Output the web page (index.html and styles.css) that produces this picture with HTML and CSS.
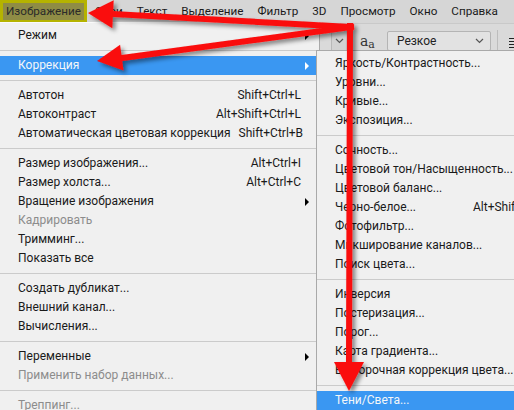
FILE: index.html
```html
<!DOCTYPE html>
<html lang="ru">
<head>
    <meta charset="UTF-8">
    <meta name="viewport" content="width=device-width, initial-scale=1.0">
    <title>Изображение — Коррекция</title>
    <link rel="stylesheet" href="styles.css">
</head>
<body>
    <div class="ps">
        <nav class="menubar">
            <span class="mb-item active">Изображение</span>
            <span class="mb-item">Слои</span>
            <span class="mb-item">Текст</span>
            <span class="mb-item">Выделение</span>
            <span class="mb-item">Фильтр</span>
            <span class="mb-item">3D</span>
            <span class="mb-item">Просмотр</span>
            <span class="mb-item">Окно</span>
            <span class="mb-item">Справка</span>
        </nav>

        <div class="optbar">
            <span class="opt-drop">
                <svg width="9" height="6" viewBox="0 0 9 6"><path d="M1 1 L4.5 4.5 L8 1" fill="none" stroke="#555" stroke-width="1.2"/></svg>
            </span>
            <span class="opt-aa">a<span class="opt-aa-small">a</span></span>
            <span class="opt-select">
                <span>Резкое</span>
                <svg width="9" height="6" viewBox="0 0 9 6"><path d="M1 1 L4.5 4.5 L8 1" fill="none" stroke="#555" stroke-width="1.2"/></svg>
            </span>
            <span class="opt-div"></span>
            <span class="opt-align">
                <svg width="10" height="14" viewBox="0 0 10 14">
                    <path d="M0 1.5 H10 M0 4.5 H10 M0 7.5 H10 M0 10.5 H10 M0 13.5 H10" stroke="#222" stroke-width="1"/>
                </svg>
            </span>
        </div>

        <ul class="menu menu-main">
            <li class="item"><span class="label">Режим</span><span class="key"></span><span class="arrow"><i></i></span></li>
            <li class="sep"></li>
            <li class="item hover"><span class="label">Коррекция</span><span class="key"></span><span class="arrow"><i></i></span></li>
            <li class="sep"></li>
            <li class="item"><span class="label">Автотон</span><span class="key">Shift+Ctrl+L</span><span class="arrow"></span></li>
            <li class="item"><span class="label">Автоконтраст</span><span class="key">Alt+Shift+Ctrl+L</span><span class="arrow"></span></li>
            <li class="item"><span class="label">Автоматическая цветовая коррекция</span><span class="key">Shift+Ctrl+B</span><span class="arrow"></span></li>
            <li class="sep"></li>
            <li class="item"><span class="label">Размер изображения...</span><span class="key">Alt+Ctrl+I</span><span class="arrow"></span></li>
            <li class="item"><span class="label">Размер холста...</span><span class="key">Alt+Ctrl+C</span><span class="arrow"></span></li>
            <li class="item"><span class="label">Вращение изображения</span><span class="key"></span><span class="arrow"><i></i></span></li>
            <li class="item disabled"><span class="label">Кадрировать</span><span class="key"></span><span class="arrow"></span></li>
            <li class="item"><span class="label">Тримминг...</span><span class="key"></span><span class="arrow"></span></li>
            <li class="item"><span class="label">Показать все</span><span class="key"></span><span class="arrow"></span></li>
            <li class="sep"></li>
            <li class="item"><span class="label">Создать дубликат...</span><span class="key"></span><span class="arrow"></span></li>
            <li class="item"><span class="label">Внешний канал...</span><span class="key"></span><span class="arrow"></span></li>
            <li class="item"><span class="label">Вычисления...</span><span class="key"></span><span class="arrow"></span></li>
            <li class="sep"></li>
            <li class="item"><span class="label">Переменные</span><span class="key"></span><span class="arrow"><i></i></span></li>
            <li class="item disabled"><span class="label">Применить набор данных...</span><span class="key"></span><span class="arrow"></span></li>
            <li class="sep"></li>
            <li class="item disabled"><span class="label">Треппинг...</span><span class="key"></span><span class="arrow"></span></li>
        </ul>

        <ul class="menu menu-sub">
            <li class="item"><span class="label">Яркость/Контрастность...</span><span class="key"></span></li>
            <li class="item"><span class="label">Уровни...</span><span class="key"></span></li>
            <li class="item"><span class="label">Кривые...</span><span class="key"></span></li>
            <li class="item"><span class="label">Экспозиция...</span><span class="key"></span></li>
            <li class="sep"></li>
            <li class="item"><span class="label">Сочность...</span><span class="key"></span></li>
            <li class="item"><span class="label">Цветовой тон/Насыщенность...</span><span class="key"></span></li>
            <li class="item"><span class="label">Цветовой баланс...</span><span class="key"></span></li>
            <li class="item"><span class="label">Черно-белое...</span><span class="key">Alt+Shift+Ctrl+B</span></li>
            <li class="item"><span class="label">Фотофильтр...</span><span class="key"></span></li>
            <li class="item"><span class="label">Микширование каналов...</span><span class="key"></span></li>
            <li class="item"><span class="label">Поиск цвета...</span><span class="key"></span></li>
            <li class="sep"></li>
            <li class="item"><span class="label">Инверсия</span><span class="key"></span></li>
            <li class="item"><span class="label">Постеризация...</span><span class="key"></span></li>
            <li class="item"><span class="label">Порог...</span><span class="key"></span></li>
            <li class="item"><span class="label">Карта градиента...</span><span class="key"></span></li>
            <li class="item"><span class="label">Выборочная коррекция цвета...</span><span class="key"></span></li>
            <li class="sep"></li>
            <li class="item hover"><span class="label">Тени/Света...</span><span class="key"></span></li>
        </ul>

        <!-- red arrows drawn over the screenshot -->
        <svg class="arrows" width="514" height="410" viewBox="0 0 514 410">
            <defs>
                <filter id="shadow" x="-10%" y="-10%" width="130%" height="130%">
                    <feDropShadow dx="3" dy="3" stdDeviation="2" flood-color="#000" flood-opacity="0.45"/>
                </filter>
            </defs>
            <g filter="url(#shadow)" fill="#fa0c0c" stroke="#fa0c0c">
                <path d="M112 14 L351 27 M122 58 L351 27 M350 26 L349 363" fill="none" stroke-width="6" stroke-linecap="square"/>
                <polygon points="88,13 113.7,0.3 112.3,28.3" stroke="none"/>
                <polygon points="97,61 120.1,44.8 123.5,70.6" stroke="none"/>
                <polygon points="349,391 334,362 364,362" stroke="none"/>
            </g>
        </svg>
    </div>
</body>
</html>
```

FILE: styles.css
```css
body {
    margin: 0;
    overflow: hidden;
}

.ps {
    position: relative;
    width: 514px;
    height: 410px;
    overflow: hidden;
    background: #d8d8d8;
    font-family: Roboto, "Noto Sans", sans-serif;
    font-size: 12px;
    color: #1a1a1a;
}

/* top menu bar */
.menubar {
    display: flex;
    align-items: center;
    height: 23px;
    background: #d6d6d6;
    white-space: nowrap;
}

.mb-item {
    padding: 0 7px;
    line-height: 17px;
    font-size: 11.7px;
}

.mb-item.active {
    margin: 0 4px 0 3px;
    padding: 0 3px;
    background: #8f8c45;
    box-shadow: 0 0 0 3px #b5b300;
    color: #2a2a2a;
}

/* options bar, mostly hidden under the menus */
.optbar {
    display: flex;
    align-items: center;
    width: max-content;
    height: 34px;
    padding-left: 331px;
    background: #dadada;
    border-top: 1px solid #c9c9c9;
}

.optbar > span {
    flex: none;
}

.opt-drop {
    display: flex;
    align-items: center;
    justify-content: center;
    width: 14px;
    height: 20px;
    border-left: 1px solid #b8b8b8;
    border-right: 1px solid #c4c4c4;
    background: #d2d2d2;
}

.opt-aa {
    margin-left: 13px;
    font-family: "DejaVu Serif", serif;
    font-size: 14px;
    color: #333;
}

.opt-aa-small {
    font-size: 11px;
    position: relative;
    top: 2px;
}

.opt-select {
    display: flex;
    align-items: center;
    justify-content: space-between;
    box-sizing: border-box;
    width: 104px;
    height: 20px;
    margin-left: 12px;
    padding: 0 6px 0 9px;
    background: #e2e2e2;
    border: 1px solid #b4b4b4;
    border-radius: 2px;
    color: #222;
}

.opt-div {
    width: 1px;
    height: 22px;
    margin-left: 6px;
    background: #bdbdbd;
}

.opt-align {
    display: flex;
    margin-left: 11px;
    padding-top: 6px;
}

/* dropdown menus */
.menu {
    position: absolute;
    margin: 0;
    padding: 3px 0 0;
    list-style: none;
    background: #f0f0f0;
    white-space: nowrap;
    box-sizing: border-box;
}

.menu-main {
    left: 0;
    top: 22px;
    width: 320px;
    height: 400px;
    border-top: 1px solid #fafafa;
    border-right: 1px solid #a9a9a9;
}

.menu-sub {
    left: 316px;
    top: 50px;
    width: 262px;
    height: 370px;
    border: 1px solid #a9a9a9;
}

.item {
    display: grid;
    grid-template-columns: 1fr auto 12px;
    align-items: center;
    height: 19px;
    padding: 0 6px 0 18px;
    line-height: 19px;
}

.menu-sub .item {
    grid-template-columns: 1fr auto;
    padding: 0 18px 0 18px;
}

.key {
    padding-left: 8px;
}

.arrow i {
    display: block;
    width: 0;
    height: 0;
    margin-left: 4px;
    border-left: 4px solid #000;
    border-top: 4px solid transparent;
    border-bottom: 4px solid transparent;
}

.item.hover {
    background: #3a97f2;
    color: #f4f6f8;
}

.item.hover .arrow i {
    border-left-color: #fff;
}

.item.disabled {
    color: #8c8c8c;
}

.sep {
    height: 11px;
    display: flex;
    align-items: center;
}

.sep::before {
    content: "";
    flex: 1;
    height: 1px;
    background: #cbcbcb;
}

.arrows {
    position: absolute;
    left: 0;
    top: 0;
    pointer-events: none;
}
```
